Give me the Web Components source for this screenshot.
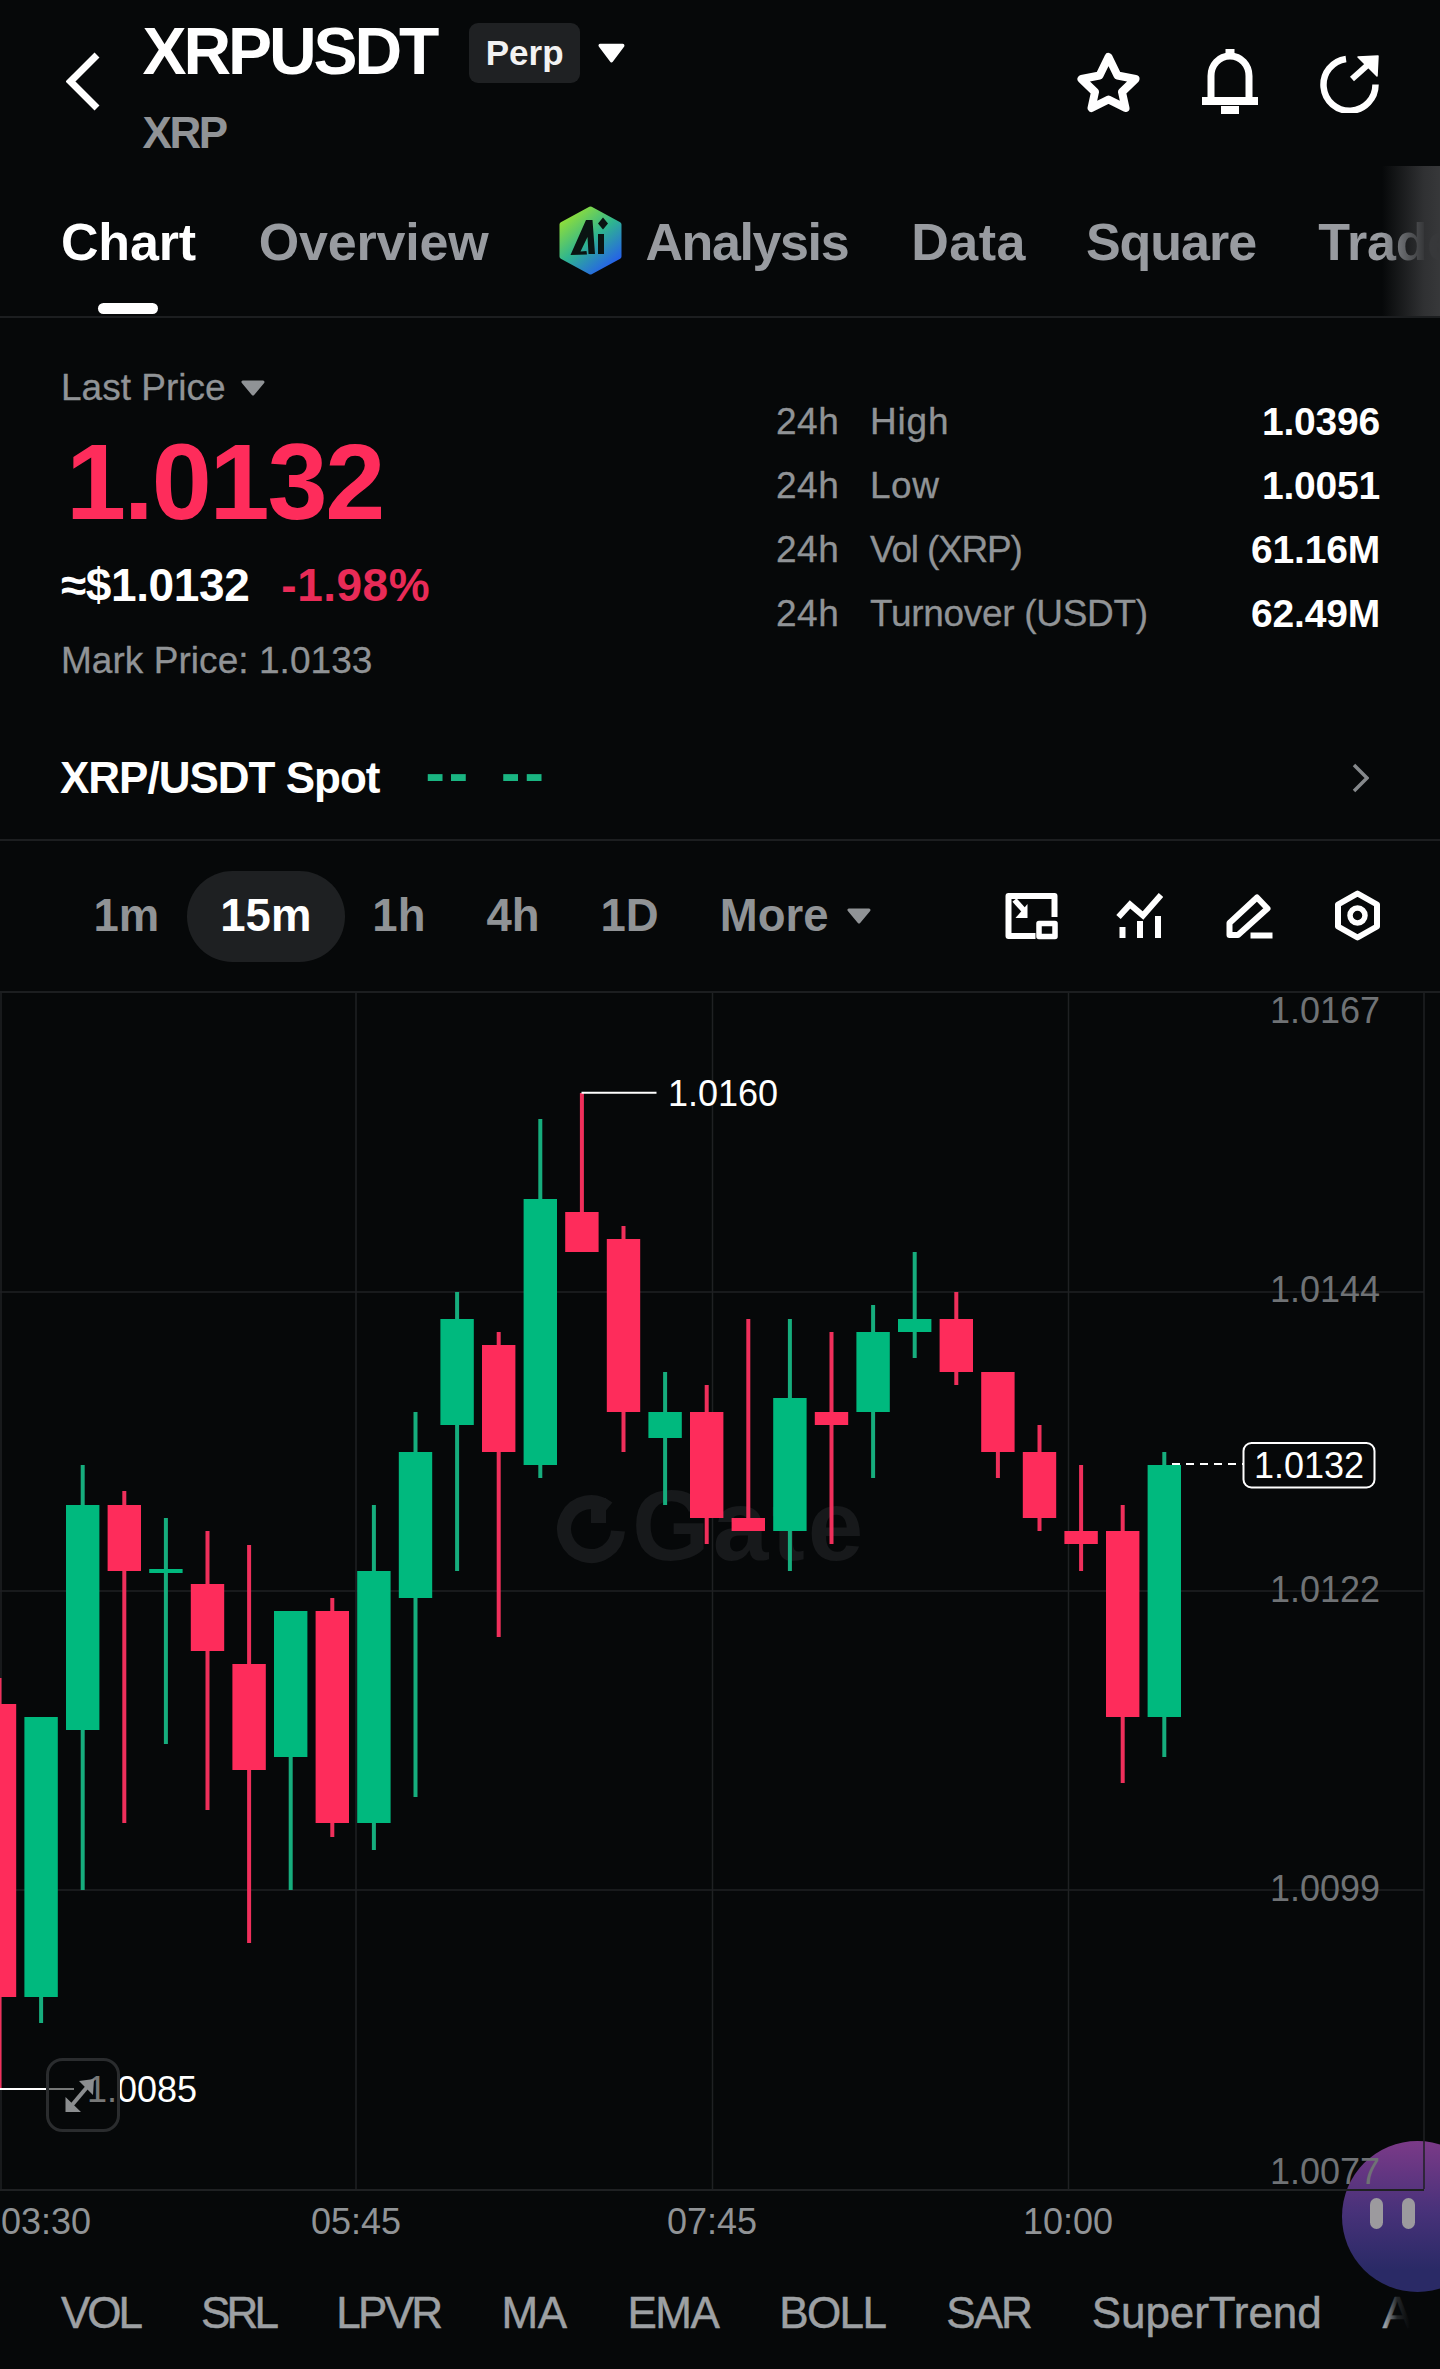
<!DOCTYPE html>
<html lang="en">
<head>
<meta charset="utf-8">
<title>XRPUSDT</title>
<style>
html,body{margin:0;padding:0;background:#060809}
body{width:1440px;height:2369px;overflow:hidden;position:relative;font-family:"Liberation Sans",Arial,sans-serif;color:#fff}
</style>
</head>
<body>
<app-header></app-header>
<tab-bar>
  <chart-tab active>Chart</chart-tab>
  <chart-tab>Overview</chart-tab>
  <chart-tab ai track="-1.4">Analysis</chart-tab>
  <chart-tab track=".5">Data</chart-tab>
  <chart-tab track="-1" style="margin-left:-3px">Square</chart-tab>
  <chart-tab style="margin-left:-1px">Trade</chart-tab>
</tab-bar>
<price-panel></price-panel>
<spot-row></spot-row>
<tf-toolbar>
  <tf-item>1m</tf-item>
  <tf-item active>15m</tf-item>
  <tf-item>1h</tf-item>
  <tf-item>4h</tf-item>
  <tf-item>1D</tf-item>
  <tf-item more>More</tf-item>
</tf-toolbar>
<kline-chart></kline-chart>
<time-axis></time-axis>
<indicator-bar></indicator-bar>
<ai-bubble></ai-bubble>

<script>
/* small triangle used by every dropdown label */
function caret(w, h, color) {
  return '<svg width="' + w + '" height="' + h + '" viewBox="0 0 24 16" preserveAspectRatio="none" style="display:block;flex:none">' +
    '<path d="M2 2H22L12 14Z" fill="' + color + '" stroke="' + color + '" stroke-width="3" stroke-linejoin="round"/></svg>';
}

class AppHeader extends HTMLElement {
  connectedCallback() {
    const root = this.attachShadow({ mode: 'open' });
    root.innerHTML = `<style>
:host{display:flex;height:166px;box-sizing:border-box;padding:0 61.5px 0 66px;align-items:flex-start}
svg{display:block;flex:none}
.back{margin-top:52px}
.col{margin-left:42.5px}
.row{display:flex;align-items:flex-start;padding-top:17.5px}
h1{margin:0;font:700 66px/66px "Liberation Sans",sans-serif;letter-spacing:-3.1px;color:#fff}
.perp{margin:5.5px 0 0 33px;width:111px;height:60px;box-sizing:border-box;background:#1f2123;border-radius:9px;font:700 35px/60px "Liberation Sans",sans-serif;text-align:center;color:#f2f2f2}
.tri{margin:25.5px 0 0 18px}
.sub{margin-top:24.5px;font:700 44px/50px "Liberation Sans",sans-serif;letter-spacing:-2.4px;color:#909396}
.icons{margin-left:auto;display:flex;gap:61.5px;align-items:flex-start}
</style>
<svg class="back" width="34" height="60" viewBox="66 52 34 60"><path d="M97 55L70.5 81.5L97 108" fill="none" stroke="#fff" stroke-width="7"/></svg>
<div class="col">
  <div class="row"><h1>XRPUSDT</h1><div class="perp">Perp</div><div class="tri">${caret(27, 20, '#fff')}</div></div>
  <div class="sub">XRP</div>
</div>
<div class="icons">
  <svg style="margin-top:51px" width="65" height="62" viewBox="1076 51 65 62"><path d="M1108.5 57L1117.5 75.5L1135.5 79L1122 92L1125.5 108L1108.5 99.5L1091.5 108L1095 92L1081.5 79L1099.5 75.5Z" fill="none" stroke="#fff" stroke-width="8" stroke-linejoin="round"/></svg>
  <svg style="margin-top:49px" width="56" height="65" viewBox="1202 49 56 65"><path d="M1211 100V76c0-11 8-20 19-20s19 9 19 20v24" fill="none" stroke="#fff" stroke-width="7"/><path d="M1225.5 49h9v8h-9zM1202 97h56v8h-56zM1221 106h18v8h-18z" fill="#fff"/></svg>
  <svg style="margin-top:55px" width="59" height="58" viewBox="1321 55 59 58"><path d="M1347 59A26 26 0 1 0 1376.5 84.5" fill="none" stroke="#fff" stroke-width="6.5"/><path d="M1353 79L1372 62" fill="none" stroke="#fff" stroke-width="6"/><path d="M1359 57L1379 56L1378 76Z" fill="#fff" stroke="#fff" stroke-width="1.5" stroke-linejoin="round"/></svg>
</div>`;
  }
}
customElements.define('app-header', AppHeader);

class TabBar extends HTMLElement {
  connectedCallback() {
    const root = this.attachShadow({ mode: 'open' });
    root.innerHTML = `<style>
:host{display:block;position:relative;height:152px;box-sizing:border-box;border-bottom:2px solid #1c1e20;overflow:hidden}
.row{display:flex;gap:63px;padding:46px 0 0 61px;height:104px;box-sizing:border-box;width:1600px}
.fade{position:absolute;right:0;top:0;bottom:0;width:58px;background:linear-gradient(90deg,rgba(48,49,51,0),rgba(48,49,51,.55) 40%,rgba(50,51,53,.95) 72%,#37383a)}
</style><div class="row"><slot></slot></div><div class="fade"></div>`;
  }
}
customElements.define('tab-bar', TabBar);

class ChartTab extends HTMLElement {
  connectedCallback() {
    const root = this.attachShadow({ mode: 'open' });
    const active = this.hasAttribute('active');
    const track = this.getAttribute('track') || '-.2';
    const badge = this.hasAttribute('ai') ? `<svg class="ai" width="63" height="69" viewBox="0 0 63 69">
<defs><linearGradient id="g" x1=".15" y1=".05" x2=".8" y2=".95"><stop offset="0" stop-color="#93e036"/><stop offset=".5" stop-color="#2fb58f"/><stop offset="1" stop-color="#2560ea"/></linearGradient></defs>
<path d="M31.5 3L60 18.5V50.5L31.5 66L3 50.5V18.5Z" fill="url(#g)" stroke="url(#g)" stroke-width="5" stroke-linejoin="round"/>
<path d="M27 14H33.5L36 48H29.5L28.5 31L21.5 45.5L27.5 45L28 48.5L11.5 49Z" fill="#0a1412"/><path d="M39 28h6v20h-6zM44 11.5l5 6-5 6-5-6z" fill="#0a1412"/></svg>` : '';
    root.innerHTML = `<style>
:host{display:flex;flex-direction:column;position:relative;height:104px;flex:none;align-items:center}
.wrap{display:flex;align-items:flex-start;gap:23px}
.ai{margin-top:-6px;margin-left:8px}
.t{font:700 52px/60px "Liberation Sans",sans-serif;color:${active ? '#fff' : '#989ba0'};letter-spacing:${track}px;white-space:nowrap}
.bar{position:absolute;left:50%;margin-left:-30px;bottom:2px;width:60px;height:11px;background:#fff;border-radius:6px}
</style><div class="wrap">${badge}<span class="t"><slot></slot></span></div>${active ? '<div class="bar"></div>' : ''}`;
  }
}
customElements.define('chart-tab', ChartTab);

class PricePanel extends HTMLElement {
  connectedCallback() {
    const root = this.attachShadow({ mode: 'open' });
    const stats = [['High', '1.0396', .8], ['Low', '1.0051', .5], ['Vol (XRP)', '61.16M', -1.2], ['Turnover (USDT)', '62.49M', -.3]];
    const rows = stats.map(function (s) {
      return '<div class="stat"><span class="h">24h</span><span class="l" style="letter-spacing:' + s[2] + 'px">' + s[0] + '</span><span class="v">' + s[1] + '</span></div>';
    }).join('');
    root.innerHTML = `<style>
:host{display:flex;height:398px;box-sizing:border-box;padding:0 60px 0 61px;justify-content:space-between;color:#909396}
.lp{display:flex;align-items:center;gap:15px;padding-top:48px;font:400 37px/44px "Liberation Sans",sans-serif;-webkit-text-stroke:.3px #909396}
.big{margin:17.5px 0 0 5px;font:700 108px/108px "Liberation Sans",sans-serif;letter-spacing:-2.2px;color:#fe2c5b}
.chg{margin-top:23px;display:flex;gap:32px;font:700 46px/52px "Liberation Sans",sans-serif}
.chg b{color:#fff;letter-spacing:-.4px}
.chg i{font-style:normal;color:#e92b57;letter-spacing:.5px}
.mark{margin-top:28.4px;font:400 37px/44px "Liberation Sans",sans-serif;letter-spacing:.05px;-webkit-text-stroke:.3px #909396}
.right{width:604px;padding-top:72px}
.stat{display:flex;height:64px;font:400 37px/64px "Liberation Sans",sans-serif}
.h{width:94px;flex:none;letter-spacing:.5px;-webkit-text-stroke:.3px #909396}
.l{-webkit-text-stroke:.3px #909396}
.v{margin-left:auto;font-size:39px;font-weight:700;color:#fff;letter-spacing:-.2px}
</style>
<div>
  <div class="lp">Last Price ${caret(24, 16, '#909396')}</div>
  <div class="big">1.0132</div>
  <div class="chg"><b>≈$1.0132</b><i>-1.98%</i></div>
  <div class="mark">Mark Price: 1.0133</div>
</div>
<div class="right">${rows}</div>`;
  }
}
customElements.define('price-panel', PricePanel);

class SpotRow extends HTMLElement {
  connectedCallback() {
    const root = this.attachShadow({ mode: 'open' });
    root.innerHTML = `<style>
:host{display:flex;height:125px;box-sizing:border-box;border-bottom:2px solid #1c1e20;padding:36.8px 71.5px 0 60px;align-items:flex-start}
.n{font:700 44px/50px "Liberation Sans",sans-serif;letter-spacing:-1px;color:#fff}
.d{font:700 58px/50px "Liberation Sans",sans-serif;letter-spacing:4px;color:#1ab582;margin:-5px 0 0 46px}
.d + .d{margin-left:29px}
svg{display:block;margin:10px 0 0 auto}
</style><span class="n">XRP/USDT Spot</span><span class="d">--</span><span class="d">--</span>
<svg width="17" height="30" viewBox="0 0 17 30"><path d="M2 2L15 15L2 28" fill="none" stroke="#85888b" stroke-width="3.5"/></svg>`;
  }
}
customElements.define('spot-row', SpotRow);

class TfToolbar extends HTMLElement {
  connectedCallback() {
    const root = this.attachShadow({ mode: 'open' });
    root.innerHTML = `<style>
:host{display:flex;height:152px;box-sizing:border-box;border-bottom:2px solid #1c1e20;padding:0 59px 0 63px;align-items:center}
svg{display:block;flex:none}
.tools{margin-left:auto;display:flex;align-items:center}
</style><slot></slot>
<div class="tools">
  <svg width="53" height="47" viewBox="1004.5 892 53 47"><path d="M1035 935H1008V895H1054V916" fill="none" stroke="#fff" stroke-width="6" stroke-linejoin="round"/><path d="M1038.5 922.5h16v13h-16z" fill="none" stroke="#fff" stroke-width="5.5" stroke-linejoin="round"/><path d="M1014 899L1024 910" fill="none" stroke="#fff" stroke-width="5.5"/><path d="M1027 903V917H1015Z" fill="#fff"/></svg>
  <svg style="margin-left:58px" width="47" height="46" viewBox="1116 891 47 46"><path d="M1118.5 915L1130 902.5L1143 913.5L1161 893" fill="none" stroke="#fff" stroke-width="6"/><path d="M1119.5 925h6v11h-6zM1137 919h6v17h-6zM1155 914h6v22h-6z" fill="#fff"/></svg>
  <svg style="margin-left:62px" width="48" height="46" viewBox="1225 891 48 46"><path d="M1229.5 933V921L1257 895.5L1267.5 906.5L1238 933Z" fill="none" stroke="#fff" stroke-width="6" stroke-linejoin="round"/><path d="M1250.5 930.5h22v6h-22z" fill="#fff"/></svg>
  <svg style="margin-left:61px" width="47" height="52" viewBox="1334 890 47 52"><path d="M1357.5 893.5L1377 904.5V926.5L1357.5 937.5L1338 926.5V904.5Z" fill="none" stroke="#fff" stroke-width="6" stroke-linejoin="round"/><circle cx="1357.5" cy="915.5" r="7.5" fill="none" stroke="#fff" stroke-width="5.5"/></svg>
</div>`;
  }
}
customElements.define('tf-toolbar', TfToolbar);

class TfItem extends HTMLElement {
  connectedCallback() {
    const root = this.attachShadow({ mode: 'open' });
    const active = this.hasAttribute('active');
    const more = this.hasAttribute('more');
    root.innerHTML = `<style>
:host{display:flex;align-items:center;gap:19px;flex:none;height:91px;box-sizing:border-box;padding:0 ${active ? 33.5 : 30.5}px;margin:0 ${active ? -3 : 0}px;border-radius:46px;background:${active ? '#1e2022' : 'transparent'};font:700 45.5px/50px "Liberation Sans",sans-serif;color:${active ? '#fff' : '#909396'}}
</style><slot></slot>${more ? caret(24, 16, '#909396') : ''}`;
  }
}
customElements.define('tf-item', TfItem);

/* candle rows: [index, up?, wickTop, bodyTop, bodyBottom, wickBottom] in page pixels */
var CANDLES = [
  [0, 0, 1678, 1704, 1997, 2088], [1, 1, 1717, 1717, 1997, 2023], [2, 1, 1465, 1505, 1730, 1890],
  [3, 0, 1491, 1505, 1571, 1823], [4, 1, 1518, 1569, 1573, 1744], [5, 0, 1531, 1584, 1651, 1810],
  [6, 0, 1545, 1664, 1770, 1943], [7, 1, 1611, 1611, 1757, 1890], [8, 0, 1598, 1611, 1823, 1837],
  [9, 1, 1505, 1571, 1823, 1850], [10, 1, 1412, 1452, 1598, 1797], [11, 1, 1292, 1319, 1425, 1571],
  [12, 0, 1332, 1345, 1452, 1637], [13, 1, 1119, 1199, 1465, 1478], [14, 0, 1093, 1212, 1252, 1252],
  [15, 0, 1226, 1239, 1412, 1452], [16, 1, 1372, 1412, 1438, 1505], [17, 0, 1385, 1412, 1518, 1544],
  [18, 0, 1319, 1518, 1531, 1531], [19, 1, 1319, 1398, 1531, 1571], [20, 0, 1332, 1412, 1425, 1544],
  [21, 1, 1305, 1332, 1412, 1478], [22, 1, 1252, 1319, 1332, 1358], [23, 0, 1292, 1319, 1372, 1385],
  [24, 0, 1372, 1372, 1452, 1478], [25, 0, 1425, 1452, 1518, 1531], [26, 0, 1465, 1531, 1544, 1571],
  [27, 0, 1505, 1531, 1717, 1783], [28, 1, 1452, 1465, 1717, 1757]
];

class KlineChart extends HTMLElement {
  connectedCallback() {
    const root = this.attachShadow({ mode: 'open' });
    const grid = [1292, 1591, 1890].map(function (y) {
      return '<path d="M0 ' + y + 'H1424"/>';
    }).join('') + [1, 356, 712.5, 1068.5, 1424].map(function (x) {
      return '<path d="M' + x + ' 993V2189"/>';
    }).join('');
    const candles = CANDLES.map(function (c) {
      const x = -0.5 + 41.6 * c[0];
      const body = c[1] ? '#00b97e' : '#fe2c5b';
      const wick = c[1] ? '#16ad7d' : '#ef2f5b';
      return '<rect x="' + (x - 2) + '" y="' + c[2] + '" width="4" height="' + (c[5] - c[2]) + '" fill="' + wick + '"/>' +
        '<rect x="' + (x - 16.7) + '" y="' + c[3] + '" width="33.4" height="' + (c[4] - c[3]) + '" fill="' + body + '"/>';
    }).join('');
    const axis = [['1.0167', 1023], ['1.0144', 1302], ['1.0122', 1602], ['1.0099', 1901], ['1.0077', 2184]].map(function (a) {
      return '<text x="1380" y="' + a[1] + '" text-anchor="end" class="ax">' + a[0] + '</text>';
    }).join('');
    root.innerHTML = `<style>
:host{display:block;position:relative;z-index:1;height:1196px}
svg{display:block;position:absolute;left:0;top:0;overflow:visible}
.grid path{stroke:#1f2123;stroke-width:1.5;fill:none}
text{font-family:"Liberation Sans",sans-serif;font-size:36px}
.ax{fill:#6f7275}
.mk{fill:#fff}
.wm{fill:#17191b;font-weight:700;font-size:100px}
</style>
<svg width="1440" height="1196" viewBox="0 993 1440 1196">
  <g class="grid">${grid}</g>
  <path d="M608 1508A27 27 0 1 0 618 1531" fill="none" stroke="#17191b" stroke-width="14"/>
  <rect x="591" y="1498" width="15" height="25" fill="#17191b"/>
  <text class="wm" x="632" y="1560" letter-spacing="3">Gate</text>
  ${candles}
  ${axis}
  <path d="M581.5 1092.7H656.5M0 2089H74" stroke="#fff" stroke-width="2" fill="none"/>
  <text class="mk" x="668" y="1106">1.0160</text>
  <text class="mk" x="87" y="2102">1.0085</text>
  <path d="M1172 1464H1243" stroke="#fff" stroke-width="2" stroke-dasharray="8 6" fill="none"/>
  <rect x="1243.5" y="1443" width="131" height="44.5" rx="8" fill="#060809" stroke="#fff" stroke-width="2"/>
  <text class="mk" x="1309" y="1478" text-anchor="middle">1.0132</text>
  <rect x="47.5" y="2059.5" width="71" height="71" rx="15" fill="rgba(8,10,10,.55)" stroke="#2a2c2e" stroke-width="3"/>
  <path d="M72 2105L88 2086" stroke="#8b8d8f" stroke-width="4" fill="none"/>
  <path d="M65.5 2112V2097L81 2112ZM94 2079L79 2081L93 2095Z" fill="#8b8d8f"/>
</svg>`;
  }
}
customElements.define('kline-chart', KlineChart);

class TimeAxis extends HTMLElement {
  connectedCallback() {
    const root = this.attachShadow({ mode: 'open' });
    root.innerHTML = `<style>
:host{display:block;position:relative;z-index:1;height:63px;box-sizing:border-box;overflow:hidden;color:#909396}
.line{height:1.5px;background:#1f2123;width:1424px}
.row{display:grid;grid-template-columns:repeat(4,356px);margin-left:-178px;font:400 36px/60px "Liberation Sans",sans-serif;text-align:center;padding-top:1.5px}
.row span:first-child{text-align:left;padding-left:179px}
.end{height:1.5px;background:#191b1d;width:1424px}
</style><div class="line"></div><div class="row"><span>03:30</span><span>05:45</span><span>07:45</span><span>10:00</span></div><div class="end"></div>`;
  }
}
customElements.define('time-axis', TimeAxis);

class IndicatorBar extends HTMLElement {
  connectedCallback() {
    const root = this.attachShadow({ mode: 'open' });
    const names = [['VOL', -3], ['SRL', -3.8], ['LPVR', -2.7], ['MA', -.4], ['EMA', -1.6], ['BOLL', -1.6], ['SAR', -2], ['SuperTrend', -.1], ['A', 0]];
    root.innerHTML = `<style>
:host{display:block;position:relative;z-index:1;height:117px;overflow:hidden}
.row{display:flex;gap:61px;padding:36px 0 0 61px;width:1700px;font:400 44px/50px "Liberation Sans",sans-serif;color:#9da0a3;-webkit-text-stroke:.5px #9da0a3}
.fade{position:absolute;right:0;top:40px;bottom:0;width:55px;background:linear-gradient(90deg,rgba(6,8,9,0),rgba(6,8,9,.8) 22%,#060809 45%)}
</style><div class="row">${names.map(function (n) { return '<span style="letter-spacing:' + n[1] + 'px">' + n[0] + '</span>'; }).join('')}</div><div class="fade"></div>`;
  }
}
customElements.define('indicator-bar', IndicatorBar);

/* floating assistant bubble, sits behind the chart texts at the right edge */
class AiBubble extends HTMLElement {
  connectedCallback() {
    const root = this.attachShadow({ mode: 'open' });
    root.innerHTML = `<style>
:host{display:block;position:absolute;z-index:0;left:1342px;top:2141px;width:98px;height:151px;overflow:hidden}
.c{width:151px;height:151px;border-radius:50%;background:linear-gradient(180deg,#7b3a88,#49327a 45%,#2a2a66 85%);position:relative}
.e{position:absolute;top:57px;width:13px;height:31px;border-radius:7px;background:#9c9a9e}
</style><div class="c"><div class="e" style="left:28px"></div><div class="e" style="left:60px"></div></div>`;
  }
}
customElements.define('ai-bubble', AiBubble);
</script>
</body>
</html>
